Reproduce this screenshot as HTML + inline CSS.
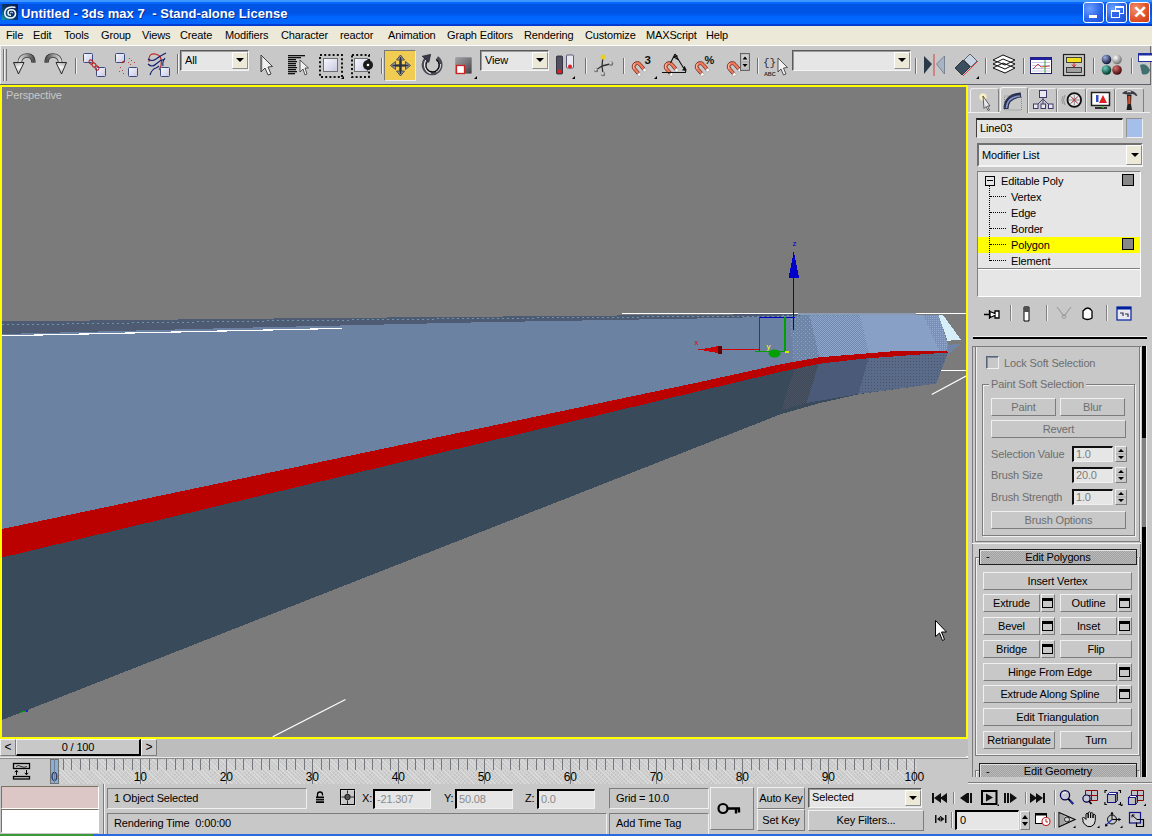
<!DOCTYPE html>
<html><head><meta charset="utf-8">
<style>
*{box-sizing:border-box;margin:0;padding:0}
html,body{width:1152px;height:836px;overflow:hidden}
body{position:relative;background:#c8c8c8;font-family:"Liberation Sans",sans-serif;font-size:11px;letter-spacing:-0.15px;color:#000}
.a{position:absolute}
#title{left:0;top:0;width:1152px;height:26px;background:linear-gradient(#3c96ff 0px,#3c96ff 1.5px,#0a68ff 2px,#0a66fc 3.8px,#0055e5 4.2px,#0054e4 13px,#005bf2 15px,#0066fe 17px,#0066fe 23.8px,#0040d8 24.2px,#0038c8 26px)}
#title .t{left:21px;top:5.5px;color:#fff;font-weight:bold;font-size:13px;letter-spacing:0.05px;white-space:pre;text-shadow:1px 1px 0 #0a2a8a}
.wb{top:2px;width:21px;height:21px;border:1px solid #fff;border-radius:3px;background:radial-gradient(circle at 30% 30%,#6aa0ff,#2a62e8 60%,#1c4fd0)}
#menu{left:0;top:26px;width:1152px;height:20px;background:#ece9d8}
#menu span{position:absolute;top:3px;font-size:11px}
#tb{left:0;top:46px;width:1152px;height:39px;background:#c8c8c8;border-top:1px solid #fff}
.sep{position:absolute;width:2px;border-left:1px solid #8c8c8c;border-right:1px solid #f0f0f0}
.dd{position:absolute;background:#e8e8e8;border:2px solid;border-color:#6e6e6e #f0f0f0 #f0f0f0 #6e6e6e}
.ddb{position:absolute;background:#ece9d8;border:1px solid;border-color:#fff #8a8a8a #8a8a8a #fff}
.ddb:after{content:"";position:absolute;left:4px;top:7px;border-left:4px solid transparent;border-right:4px solid transparent;border-top:4px solid #000}
#vp{left:0;top:85px;width:968px;height:654px;background:#7b7b7b;border:2px solid #ffff00;overflow:hidden}
#cp{left:968px;top:85px;width:184px;height:698px;background:#c8c8c8}
.btn{position:absolute;background:#c8c8c8;border:1px solid;border-color:#ececec #7c7c7c #7c7c7c #ececec;text-align:center;line-height:16px;white-space:nowrap}
.sb{position:absolute;width:15px;background:#c8c8c8;border:1px solid;border-color:#ececec #7c7c7c #7c7c7c #ececec}
.sb:after{content:"";position:absolute;left:3px;top:2px;width:7px;height:10px;border:1px solid #000;border-top:3px solid #000;background:#fff}
.gray{color:#7c7c7c}
.field{position:absolute;background:#e6e6e6;border:1px solid;border-color:#000 #f0f0f0 #f0f0f0 #000}
</style></head><body>

<!-- TITLE BAR -->
<div id="title" class="a">
  <svg class="a" style="left:2px;top:4px" width="16" height="16" viewBox="0 0 16 16"><defs><linearGradient id="ig" x1="1" y1="0" x2="0" y2="1"><stop offset="0" stop-color="#0a1848"/><stop offset="0.6" stop-color="#0c3a6a"/><stop offset="1" stop-color="#18a0b0"/></linearGradient></defs><rect width="16" height="16" fill="url(#ig)"/><path d="M13.5,3.5 Q10,2.5 7,3.5 Q2.5,5 2.8,9.5 Q3.2,14 8.5,14 Q13.5,13.8 13.5,9.5 Q13.3,6 9.5,5.8 Q6,5.8 6,9 Q6.2,11.5 9,11.3" fill="none" stroke="#f0f8ff" stroke-width="1.6"/><path d="M8,9 q1.5,-1.5 3,0" stroke="#e0f0ff" stroke-width="1" fill="none"/></svg>
  <div class="a t">Untitled - 3ds max 7  - Stand-alone License</div>
  <div class="a wb" style="left:1083px"><div class="a" style="left:5px;top:12px;width:8px;height:3px;background:#fff"></div></div>
  <div class="a wb" style="left:1106px"><div class="a" style="left:8px;top:3px;width:9px;height:8px;border:1px solid #fff;border-top-width:2px"></div><div class="a" style="left:4px;top:7px;width:9px;height:8px;border:1px solid #fff;border-top-width:2px;background:#2f66e6"></div></div>
  <div class="a wb" style="left:1129px;background:radial-gradient(circle at 30% 30%,#f0906a,#e0502a 60%,#c83a18)"><div class="a" style="left:3px;top:2px;font-size:17px;line-height:16px;color:#fff;font-weight:bold">&#x2715;</div></div>
</div>

<!-- MENU -->
<div id="menu" class="a">
  <span style="left:6px">File</span><span style="left:33px">Edit</span><span style="left:64px">Tools</span><span style="left:101px">Group</span><span style="left:142px">Views</span><span style="left:180px">Create</span><span style="left:225px">Modifiers</span><span style="left:281px">Character</span><span style="left:340px">reactor</span><span style="left:388px">Animation</span><span style="left:447px">Graph Editors</span><span style="left:524px">Rendering</span><span style="left:585px">Customize</span><span style="left:646px">MAXScript</span><span style="left:706px">Help</span>
</div>

<!-- TOOLBAR -->
<!--TB-->
<div class="a" style="left:0px;top:45px;width:1152px;height:1px;background:#fdfdfd"></div>
<div class="a" style="left:0px;top:46px;width:1151px;height:38px;background:#c8c8c8;border-left:1px solid #ececec"></div>
<div class="a" style="left:1150px;top:46px;width:1px;height:38px;background:#6a6a6a"></div>
<div class="a" style="left:0px;top:84px;width:1151px;height:1px;background:#60606c"></div>
<div class="a" style="left:384px;top:50px;width:32px;height:31px;background:#f0cd52;border:1px solid;border-color:#787878 #ececec #ececec #787878"></div>
<div class="a" style="left:180px;top:50px;width:69px;height:21px;background:#e6e6e6;border:1px solid;border-color:#5a5a5a #f4f4f4 #f4f4f4 #5a5a5a;box-shadow:inset 1px 1px 0 #9a9a9a;line-height:19px;padding-left:4px;font-size:11px">All</div>
<div class="a" style="left:232px;top:52px;width:16px;height:17px;background:#ece9d8;border:1px solid;border-color:#fff #8c8c8c #8c8c8c #fff"></div>
<svg class="a" style="left:232px;top:52px" width="16" height="17"><path d="M4,6 h8 l-4,4z" fill="#000"/></svg>
<div class="a" style="left:480px;top:50px;width:69px;height:21px;background:#e6e6e6;border:1px solid;border-color:#5a5a5a #f4f4f4 #f4f4f4 #5a5a5a;box-shadow:inset 1px 1px 0 #9a9a9a;line-height:19px;padding-left:4px;font-size:11px">View</div>
<div class="a" style="left:532px;top:52px;width:16px;height:17px;background:#ece9d8;border:1px solid;border-color:#fff #8c8c8c #8c8c8c #fff"></div>
<svg class="a" style="left:532px;top:52px" width="16" height="17"><path d="M4,6 h8 l-4,4z" fill="#000"/></svg>
<div class="a" style="left:792px;top:50px;width:119px;height:21px;background:#e6e6e6;border:1px solid;border-color:#5a5a5a #f4f4f4 #f4f4f4 #5a5a5a;box-shadow:inset 1px 1px 0 #9a9a9a;line-height:19px;padding-left:4px;font-size:11px"></div>
<div class="a" style="left:894px;top:52px;width:16px;height:17px;background:#ece9d8;border:1px solid;border-color:#fff #8c8c8c #8c8c8c #fff"></div>
<svg class="a" style="left:894px;top:52px" width="16" height="17"><path d="M4,6 h8 l-4,4z" fill="#000"/></svg>
<svg class="a" style="left:0;top:46px" width="1152" height="38" viewBox="0 46 1152 38">
<defs>
<linearGradient id="arr" x1="0" y1="0" x2="1" y2="1"><stop offset="0" stop-color="#f4f4f4"/><stop offset="0.5" stop-color="#a0a0a0"/><stop offset="1" stop-color="#303030"/></linearGradient>
<linearGradient id="arr2" x1="1" y1="0" x2="0" y2="1"><stop offset="0" stop-color="#f4f4f4"/><stop offset="0.5" stop-color="#a0a0a0"/><stop offset="1" stop-color="#303030"/></linearGradient>
<linearGradient id="box" x1="0" y1="0" x2="1" y2="1"><stop offset="0" stop-color="#f8f8ff"/><stop offset="1" stop-color="#c8c8e0"/></linearGradient>
<linearGradient id="arc" x1="0" y1="0" x2="1" y2="0"><stop offset="0" stop-color="#d8d8d8"/><stop offset="0.5" stop-color="#9a9a9a"/><stop offset="1" stop-color="#505050"/></linearGradient><linearGradient id="ah" x1="0" y1="0" x2="0.3" y2="1"><stop offset="0" stop-color="#a0a0a0"/><stop offset="0.5" stop-color="#f4f4f4"/><stop offset="1" stop-color="#c0c0c0"/></linearGradient>
<radialGradient id="ball" cx="0.35" cy="0.35" r="0.7"><stop offset="0" stop-color="#f0f0f0"/><stop offset="1" stop-color="#505050"/></radialGradient>
</defs>
<!-- grip -->
<path d="M3.5,49V81M6.5,49V81" stroke="#707070" stroke-width="1"/><path d="M4.5,49V81" stroke="#f0f0f0"/>
<!-- undo -->
<g id="undo">
<path d="M19.5,64 Q20,55.5 27,55.5 Q33.5,55.5 33.5,62.5" fill="none" stroke="#3a3a3a" stroke-width="4.6"/>
<path d="M19.5,64 Q20,55.5 27,55.5 Q33.5,55.5 33.5,62.5" fill="none" stroke="url(#arc)" stroke-width="3"/>
<path d="M13.5,62.5 L24,62.5 L18.5,74Z" fill="url(#ah)" stroke="#1a1a1a" stroke-width="0.9"/>
</g>
<g transform="translate(80,0) scale(-1,1)">
<path d="M19.5,64 Q20,55.5 27,55.5 Q33.5,55.5 33.5,62.5" fill="none" stroke="#3a3a3a" stroke-width="4.6"/>
<path d="M19.5,64 Q20,55.5 27,55.5 Q33.5,55.5 33.5,62.5" fill="none" stroke="url(#arc)" stroke-width="3"/>
<path d="M13.5,62.5 L24,62.5 L18.5,74Z" fill="url(#ah)" stroke="#1a1a1a" stroke-width="0.9"/>
</g>
<path d="M75.5,58V74" stroke="#707070"/><path d="M76.5,58V74" stroke="#f0f0f0"/>
<!-- link -->
<rect x="83.5" y="53.5" width="9" height="9" rx="1" fill="url(#box)" stroke="#3a4a80"/>
<rect x="96.5" y="67.5" width="9" height="9" rx="1" fill="url(#box)" stroke="#3a4a80"/>
<g stroke="#b02020" stroke-width="1" fill="none"><ellipse cx="91" cy="62" rx="1.8" ry="2.2" transform="rotate(-45 91 62)"/><ellipse cx="94" cy="65" rx="1.8" ry="2.2" transform="rotate(-45 94 65)"/><ellipse cx="97" cy="68" rx="1.8" ry="2.2" transform="rotate(-45 97 68)"/></g>
<!-- unlink -->
<rect x="115.5" y="53.5" width="9" height="9" rx="1" fill="url(#box)" stroke="#3a4a80"/>
<rect x="128.5" y="67.5" width="9" height="9" rx="1" fill="url(#box)" stroke="#3a4a80"/>
<path d="M122,63 q1,-2 3,-2" stroke="#b02020" stroke-width="1.2" fill="none"/>
<g fill="#c04040"><rect x="129" y="58" width="1" height="1"/><rect x="131" y="60" width="1" height="1"/><rect x="128" y="62" width="1" height="1"/><rect x="134" y="62" width="1" height="1"/><rect x="120" y="67" width="1" height="1"/><rect x="122" y="70" width="1" height="1"/><rect x="119" y="71" width="1" height="1"/><rect x="123" y="73" width="1" height="1"/><rect x="130" y="64" width="1" height="1"/></g>
<!-- bind space warp -->
<path d="M149,62 Q148,53 155,54 Q163,55 161,66 L159,70" stroke="#c02020" stroke-width="1.1" fill="none"/>
<path d="M148,59 Q152,62 156,59 Q160,56 166,53 M148,64 Q152,68 156,64 Q160,60 165,59 M150,75 Q152,69 156,68 Q158,67 159,66 M163,66 Q162,62 165,58" stroke="#102070" stroke-width="1.1" fill="none"/>
<rect x="160.5" y="67.5" width="9" height="9" rx="1" fill="url(#box)" stroke="#3a4a80"/>
<path d="M177.5,54V74" stroke="#707070"/><path d="M178.5,54V74" stroke="#f0f0f0"/>
<!-- select arrow -->
<path d="M261,55 L261,72 L265,68 L268,75 L271,74 L268,67 L272.5,66.5Z" fill="#f0f0f0" stroke="#303030" stroke-width="0.9"/>
<path d="M261.5,57 L261.5,71" stroke="#707070" stroke-width="1.5"/>
<!-- select by name -->
<g fill="#101010"><rect x="288" y="55" width="17" height="1.3"/><rect x="288" y="57" width="13" height="1.3"/><rect x="288" y="59" width="8" height="1.3"/><rect x="288" y="61" width="9" height="1.3"/><rect x="288" y="63" width="8" height="1.3"/><rect x="288" y="65" width="8" height="1.3"/><rect x="288" y="67" width="9" height="1.3"/><rect x="288" y="69" width="8" height="1.3"/><rect x="288" y="71" width="9" height="1.3"/><rect x="288" y="73" width="7" height="1.3"/></g>
<path d="M300,60 L300,72 L303,69 L305,75 L307,74 L305,68 L308.5,68Z" fill="#f0f0f0" stroke="#303030" stroke-width="0.8"/>
<!-- rect selection -->
<rect x="320" y="55" width="22" height="22" fill="none" stroke="#101010" stroke-width="2" stroke-dasharray="2,2.2"/>
<rect x="323.5" y="58.5" width="14" height="13" fill="url(#box)" stroke="#707070"/>
<path d="M341,79 L344,76 L344,79Z" fill="#000"/>
<!-- window/crossing -->
<rect x="352" y="55" width="17" height="22" fill="none" stroke="#101010" stroke-width="2" stroke-dasharray="2,2.2"/>
<rect x="354.5" y="58.5" width="13" height="13" fill="url(#box)" stroke="#707070"/>
<circle cx="368" cy="65" r="5" fill="#1a1a1a"/><circle cx="368" cy="65" r="1.3" fill="#fff"/>
<path d="M381.5,58V74" stroke="#707070"/><path d="M382.5,58V74" stroke="#f0f0f0"/>
<!-- move -->
<path d="M400.5,60 V71.5 M395,65.5 H406" stroke="#2a3040" stroke-width="2.2"/>
<path d="M400.5,55 L396.5,60 H404.5Z M400.5,76 L396.5,71 H404.5Z M390.5,65.5 L395.5,61.5 V69.5Z M410.5,65.5 L405.5,61.5 V69.5Z" fill="#9a9aa2" stroke="#3a3a48" stroke-width="0.8"/>
<path d="M400.5,57 V74 M392.5,65.5 H408.5" stroke="#2a3040" stroke-width="1.6"/>
<!-- rotate -->
<path d="M428.5,57.2 A8.5,8.5 0 1 0 436.97,57.9" stroke="#4a4a50" stroke-width="3.8" fill="none"/>
<path d="M426,60 A8.8,8.8 0 0 0 431,73.3" stroke="#e8e8f0" stroke-width="1.2" fill="none"/>
<path d="M436,72 A8.6,8.6 0 0 0 440.5,64" stroke="#d8d8e0" stroke-width="1.2" fill="none"/>
<path d="M429.5,59.5 A6.6,6.6 0 1 0 436.2,59.8" stroke="#000" stroke-width="1.1" fill="none"/>
<path d="M422.1,56.2 L430.75,54.3 L428.8,62.4Z" fill="#3a3a48" stroke="#202028" stroke-width="0.6"/>
<!-- scale -->
<rect x="455.5" y="57.5" width="16" height="16" fill="#505058"/>
<rect x="455.5" y="57.5" width="16" height="16" fill="url(#arr)" opacity="0.5"/>
<rect x="456.5" y="65.5" width="8" height="8" fill="#fff" stroke="#d02020" stroke-width="1.3"/>
<path d="M474,79 L477,76 L477,79Z" fill="#000"/>
<!-- pivot -->
<rect x="556.5" y="56" width="6" height="18" rx="1" fill="#505060" stroke="#202030" stroke-width="0.8"/>
<circle cx="559.5" cy="71.5" r="2" fill="#e02020"/>
<rect x="566.5" y="55" width="7" height="13" rx="1" fill="#e8e8f0" stroke="#3a3a60" stroke-width="0.8"/>
<circle cx="570" cy="66.5" r="2" fill="#e02020"/>
<path d="M572,79 L575,76 L575,79Z" fill="#000"/>
<path d="M585.5,58V74" stroke="#707070"/><path d="M586.5,58V74" stroke="#f0f0f0"/>
<!-- axis constraints -->
<path d="M603,56 L602,66 L596,70 M602,66 L610,64 M602,66 L603,74" stroke="#303030" stroke-width="1.3" fill="none"/>
<circle cx="603" cy="57" r="2.5" fill="#e8d020"/><circle cx="596" cy="70" r="2.2" fill="url(#ball)"/><circle cx="611" cy="63.5" r="2.2" fill="url(#ball)"/><circle cx="603" cy="74" r="2.2" fill="url(#ball)"/>
<path d="M623.5,58V74" stroke="#707070"/><path d="M624.5,58V74" stroke="#f0f0f0"/>
<!-- snaps -->
<g id="mag"><g transform="translate(637.2,66.6) rotate(-40)"><path d="M-5,6 V0 A5,5 0 0 1 5,0 V6 H2 V0 A2,2 0 0 0 -2,0 V6Z" fill="#f07a5a" stroke="#602018" stroke-width="0.7"/><path d="M-3.8,0 A3.8,3.8 0 0 1 0,-3.8" stroke="#ffb8a0" stroke-width="1" fill="none"/><rect x="-5" y="6" width="3" height="2.8" fill="#fff" stroke="#808080" stroke-width="0.4"/><rect x="2" y="6" width="3" height="2.8" fill="#fff" stroke="#808080" stroke-width="0.4"/></g></g>
<text x="644.5" y="63.5" font-family="Liberation Sans" font-weight="bold" font-size="11.5" fill="#101010">3</text>
<path d="M654,79 L657,76 L657,79Z" fill="#000"/>
<g transform="translate(32,0)"><g transform="translate(637.2,66.6) rotate(-40)"><path d="M-5,6 V0 A5,5 0 0 1 5,0 V6 H2 V0 A2,2 0 0 0 -2,0 V6Z" fill="#f07a5a" stroke="#602018" stroke-width="0.7"/><path d="M-3.8,0 A3.8,3.8 0 0 1 0,-3.8" stroke="#ffb8a0" stroke-width="1" fill="none"/><rect x="-5" y="6" width="3" height="2.8" fill="#fff" stroke="#808080" stroke-width="0.4"/><rect x="2" y="6" width="3" height="2.8" fill="#fff" stroke="#808080" stroke-width="0.4"/></g></g>
<path d="M662,72.5 L686,72.5 M675,54 L686,72 M670.5,63 L675,54 M674,57 l3,-1 l0,3z M683,70 l1.5,-3 l1.5,3z" stroke="#101010" stroke-width="1.1" fill="none"/>
<g transform="translate(63,0)"><g transform="translate(637.2,66.6) rotate(-40)"><path d="M-5,6 V0 A5,5 0 0 1 5,0 V6 H2 V0 A2,2 0 0 0 -2,0 V6Z" fill="#f07a5a" stroke="#602018" stroke-width="0.7"/><path d="M-3.8,0 A3.8,3.8 0 0 1 0,-3.8" stroke="#ffb8a0" stroke-width="1" fill="none"/><rect x="-5" y="6" width="3" height="2.8" fill="#fff" stroke="#808080" stroke-width="0.4"/><rect x="2" y="6" width="3" height="2.8" fill="#fff" stroke="#808080" stroke-width="0.4"/></g></g>
<text x="704.5" y="63.5" font-family="Liberation Sans" font-weight="bold" font-size="11" fill="#101010">%</text>
<g transform="translate(95,0)"><g transform="translate(637.2,66.6) rotate(-40)"><path d="M-5,6 V0 A5,5 0 0 1 5,0 V6 H2 V0 A2,2 0 0 0 -2,0 V6Z" fill="#f07a5a" stroke="#602018" stroke-width="0.7"/><path d="M-3.8,0 A3.8,3.8 0 0 1 0,-3.8" stroke="#ffb8a0" stroke-width="1" fill="none"/><rect x="-5" y="6" width="3" height="2.8" fill="#fff" stroke="#808080" stroke-width="0.4"/><rect x="2" y="6" width="3" height="2.8" fill="#fff" stroke="#808080" stroke-width="0.4"/></g></g>
<rect x="740.5" y="53.5" width="9" height="17" fill="#b0b0b0" stroke="#505050" stroke-width="0.8"/><rect x="741.5" y="54.5" width="7" height="6.5" fill="#d0d0d0"/><rect x="741.5" y="62.5" width="7" height="6.5" fill="#c0c0c0"/>
<path d="M742.5,59.5 L745,56.5 L747.5,59.5Z M742.5,64 L747.5,64 L745,67Z" fill="#000"/>
<path d="M757.5,58V74" stroke="#707070"/><path d="M758.5,58V74" stroke="#f0f0f0"/>
<!-- named sel -->
<text x="763" y="66" font-family="Liberation Mono" font-size="11" fill="#303030">{}</text>
<text x="764" y="76" font-family="Liberation Sans" font-weight="bold" font-size="5.5" fill="#303030">ABC</text>
<path d="M778,58 L778,72 L781,69 L783.5,75 L786,74 L783.5,68 L787.5,67.5Z" fill="#f0f0f0" stroke="#303030" stroke-width="0.8"/>
<path d="M915.5,58V74" stroke="#707070"/><path d="M916.5,58V74" stroke="#f0f0f0"/>
<!-- mirror -->
<path d="M924,56 L932,64 L924,74Z" fill="#2a3a48"/><path d="M944.5,56 L936.5,64 L944.5,74Z" fill="#a8b4c4" stroke="#506070" stroke-width="0.6"/>
<path d="M934,54V76" stroke="#d04040" stroke-width="1"/>
<!-- align -->
<path d="M955,68 L963,60 L970,67 L962,75Z" fill="#3a5060" stroke="#202020" stroke-width="0.8"/>
<path d="M964,60 L970,54 L977,61 L971,67Z" fill="#c8d4e4" stroke="#404850" stroke-width="0.8"/>
<path d="M963,76 L978,61" stroke="#e04040" stroke-width="1"/>
<path d="M976,79 L979,76 L979,79Z" fill="#000"/>
<path d="M985.5,58V74" stroke="#707070"/><path d="M986.5,58V74" stroke="#f0f0f0"/>
<!-- layers -->
<path d="M993,60 L1003,55 L1015,60 L1005,65Z M993,64 L1003,59 L1015,64 L1005,69Z M993,68 L1003,63 L1015,68 L1005,73Z" fill="#fff" stroke="#101010" stroke-width="1"/>
<path d="M1023.5,58V74" stroke="#707070"/><path d="M1024.5,58V74" stroke="#f0f0f0"/>
<!-- curve editor -->
<rect x="1030.5" y="57.5" width="21" height="16" fill="#fff" stroke="#202060"/>
<rect x="1030.5" y="57.5" width="21" height="2.5" fill="#2020a0"/>
<path d="M1032,62.5h18M1032,65.5h18M1032,68.5h18M1032,71h18" stroke="#a0a0d0" stroke-width="0.6"/>
<path d="M1033,69 L1038,64 L1041,67 L1050,66" stroke="#d03030" stroke-width="0.9" fill="none"/>
<path d="M1045,60V73" stroke="#20a020" stroke-width="0.9"/>
<!-- schematic -->
<rect x="1063.5" y="54.5" width="21" height="21" fill="#c8c8c8" stroke="#202020" stroke-width="1.2"/>
<rect x="1066.5" y="57.5" width="15" height="5" fill="#f0e020" stroke="#202020" stroke-width="0.8"/>
<rect x="1066.5" y="67.5" width="15" height="5" fill="#a0a0a0" stroke="#202020" stroke-width="0.8"/>
<path d="M1074,62.5V66 M1072,64.5 L1074,67 L1076,64.5" stroke="#d02020" stroke-width="1" fill="none"/>
<path d="M1093.5,58V74" stroke="#707070"/><path d="M1094.5,58V74" stroke="#f0f0f0"/>
<!-- material editor -->
<radialGradient id="s1" cx="0.35" cy="0.3" r="0.7"><stop offset="0" stop-color="#a0b0e0"/><stop offset="1" stop-color="#101838"/></radialGradient>
<radialGradient id="s2" cx="0.35" cy="0.3" r="0.7"><stop offset="0" stop-color="#ffffff"/><stop offset="1" stop-color="#707070"/></radialGradient>
<radialGradient id="s3" cx="0.35" cy="0.3" r="0.7"><stop offset="0" stop-color="#70d0c0"/><stop offset="1" stop-color="#003828"/></radialGradient>
<radialGradient id="s4" cx="0.35" cy="0.3" r="0.7"><stop offset="0" stop-color="#e07070"/><stop offset="1" stop-color="#400808"/></radialGradient>
<circle cx="1106.5" cy="59.5" r="4.8" fill="url(#s1)"/><circle cx="1117" cy="59.5" r="4.8" fill="url(#s2)"/>
<circle cx="1106.5" cy="70" r="4.8" fill="url(#s3)"/><circle cx="1117" cy="70" r="4.8" fill="url(#s4)"/>
<path d="M1131.5,58V74" stroke="#707070"/><path d="M1132.5,58V74" stroke="#f0f0f0"/>
<!-- render scene -->
<rect x="1138.5" y="53.5" width="14" height="8" fill="#fff" stroke="#2030a0"/><rect x="1138.5" y="53.5" width="14" height="2" fill="#2030a0"/>
<path d="M1140,65 Q1146,62 1150,70 Q1148,76 1142,74Z" fill="#407070"/>
</svg>
<!--/TB-->
<!-- VIEWPORT -->
<div id="vp" class="a"></div>
<svg class="a" style="left:2px;top:87px" width="964" height="650" viewBox="2 87 964 650" shape-rendering="crispEdges">
<defs>
<pattern id="dotA" width="4" height="4" patternUnits="userSpaceOnUse"><rect width="4" height="4" fill="#6e85a7"/><rect x="1" y="1" width="1" height="1" fill="#98aac4"/><rect x="3" y="3" width="1" height="1" fill="#8a9ebc"/></pattern>
<pattern id="dotB" width="2" height="2" patternUnits="userSpaceOnUse"><rect width="2" height="2" fill="#7189ad"/><rect width="1" height="1" fill="#8ea6ce"/><rect x="1" y="1" width="1" height="1" fill="#8ea6ce"/></pattern>
<pattern id="dotD" width="2" height="2" patternUnits="userSpaceOnUse"><rect width="2" height="2" fill="#3b4858"/><rect width="1" height="1" fill="#4e5464"/><rect x="1" y="1" width="1" height="1" fill="#4e5464"/></pattern>
<pattern id="dotF" width="3" height="3" patternUnits="userSpaceOnUse"><rect width="3" height="3" fill="#5a6b8a"/><rect x="1" y="1" width="1" height="1" fill="#46566f"/></pattern>
<pattern id="dotG" width="2" height="2" patternUnits="userSpaceOnUse"><rect width="2" height="2" fill="#7890b6"/><rect width="1" height="1" fill="#97acd0"/></pattern>
</defs>
<!-- top face -->
<polygon fill="#6b82a3" points="2,321.5 938,314.7 948,345 946,350.5 890,351.5 860,354 820,357.2 780,364.4 700,382 2,529"/>
<polygon fill="url(#dotA)" points="789.4,315 809.5,315 819.5,357.6 794,363.5"/>
<polygon fill="url(#dotB)" points="809.5,315 859.7,314.8 870,357 820.5,362"/>
<polygon fill="#88a0c6" points="859.7,314.8 923,314.7 941,355 870,357"/>
<polygon fill="url(#dotG)" points="923,314.7 938.3,314.7 948.2,344.7 946,352 941,355"/>
<polygon fill="#d6eefa" points="938.3,314.7 942.9,314.7 960.7,339.5 947.5,340.8"/>
<polygon fill="#6f84a6" points="948.2,344.7 960.7,344 946.2,355.9"/>
<!-- dark band near far edge -->
<polygon fill="#4e5b72" points="2,321.5 240,318.8 480,316.7 720,314.6 800,314 800,316 720,318.1 480,322.3 240,327.8 2,334"/>
<polyline fill="none" stroke="#6a94a8" stroke-width="1" stroke-dasharray="2,3" points="2,325 240,321.3 480,318.5 720,316.3 860,315.6"/>
<polyline fill="none" stroke="#ffffff" stroke-width="1.2" points="2,335.8 342,328.4"/>
<polyline fill="none" stroke="#ffffff" stroke-width="1.2" points="622,313.4 798,313.2"/>
<rect x="798" y="313" width="118" height="2" fill="#8c9ab4"/>
<polyline fill="none" stroke="#ffffff" stroke-width="1.2" points="916,313.6 966,313.6"/>
<!-- side face -->
<polygon fill="#394a5b" points="2,557.5 700,390.9 780,372 820,363.7 860,359 890,356.7 948,352.5 936.3,383.6 860,394 820,403 780,414.5 2,720"/>
<polygon fill="url(#dotD)" points="795,366.8 819.5,361.5 806.6,403 781.5,410"/>
<polygon fill="#4a5a78" points="819.5,361.5 869,356.5 858.3,394 806.6,403"/>
<polygon fill="url(#dotF)" points="869,356.5 948,352.5 936.3,383.6 858.3,394"/>
<!-- red stripe -->
<polygon fill="#bb0000" points="2,529 700,382 780,364.4 820,357.2 860,354 890,351.5 946,350.5 948,352.5 890,356.7 860,359 820,363.7 780,372 700,390.9 2,557.5"/>
<!-- white lines -->
<line x1="941" y1="370.7" x2="966" y2="370.7" stroke="#fff" stroke-width="1.5"/>
<line x1="931.7" y1="394.5" x2="966" y2="376" stroke="#fff" stroke-width="1.2" shape-rendering="auto"/>
<line x1="272.7" y1="736.8" x2="345.5" y2="699.5" stroke="#fff" stroke-width="1.2" shape-rendering="auto"/>
<!-- gizmo -->
<g shape-rendering="crispEdges">
<rect x="793" y="270" width="1" height="60" fill="#0000c8"/>
<polygon fill="#0000c8" points="793.8,251 788.7,277.7 799.1,277.7"/>
<line x1="760" y1="317.4" x2="794.8" y2="317.4" stroke="#0000c8" stroke-width="1.5"/>
<line x1="759.5" y1="317" x2="759.5" y2="350.5" stroke="#d00000" stroke-width="1.5"/>
<line x1="785" y1="317.4" x2="785" y2="351.3" stroke="#00a000" stroke-width="1.5"/>
<line x1="698" y1="349.7" x2="760" y2="349.7" stroke="#d00000" stroke-width="1.5"/>
<polygon fill="#d00000" points="699,349.7 721.8,345.5 721.8,353.8"/>
<rect x="718" y="345.5" width="3.5" height="8" fill="#600000"/>
<line x1="755.3" y1="351.3" x2="785" y2="351.3" stroke="#00a000" stroke-width="1.5"/>
<line x1="772" y1="350.5" x2="777" y2="350.5" stroke="#e8e000" stroke-width="1.5"/>
<line x1="785" y1="352" x2="789" y2="352" stroke="#e8e000" stroke-width="1.5"/>
<ellipse cx="774.5" cy="353.5" rx="6" ry="4" fill="#00a000" shape-rendering="auto"/>
</g>
<text x="792.5" y="245.5" font-family="Liberation Sans" font-size="8" fill="#0000d0">z</text>
<text x="694.5" y="345" font-family="Liberation Sans" font-size="8" fill="#e00000">x</text>
<text x="766.5" y="349" font-family="Liberation Sans" font-size="8" fill="#ffff00">y</text>
<!-- world-axis --><line x1="20" y1="712.5" x2="26" y2="711" stroke="#00a000" stroke-width="1"/><rect x="26" y="710" width="2" height="2" fill="#2020d0"/>
<!-- mouse cursor -->
<polygon fill="#fff" stroke="#000" stroke-width="1" shape-rendering="auto" points="935.5,620.5 935.5,636.5 939.5,633 942.5,640.5 944.5,639.5 941.5,632 946.5,632"/>
</svg>
<div class="a" style="left:6px;top:89px;color:#c8c8c8;font-size:11px">Perspective</div>

<!-- COMMAND PANEL -->
<div id="cp" class="a"></div>
<!--CP-->
<div class="a" style="left:970px;top:88px;width:29px;height:24px;background:#c8c8c8;border-left:1px solid #ececec;border-top:1px solid #ececec;border-right:1px solid #808080;border-radius:3px 3px 0 0;"></div>
<div class="a" style="left:1000px;top:87px;width:28px;height:26px;background:#c8c8c8;border-left:1px solid #f4f4f4;border-top:1px solid #f4f4f4;border-right:1px solid #808080;border-radius:3px 3px 0 0;z-index:2;"></div>
<div class="a" style="left:1028px;top:88px;width:29px;height:24px;background:#c8c8c8;border-left:1px solid #ececec;border-top:1px solid #ececec;border-right:1px solid #808080;border-radius:3px 3px 0 0;"></div>
<div class="a" style="left:1057px;top:88px;width:29px;height:24px;background:#c8c8c8;border-left:1px solid #ececec;border-top:1px solid #ececec;border-right:1px solid #808080;border-radius:3px 3px 0 0;"></div>
<div class="a" style="left:1086px;top:88px;width:29px;height:24px;background:#c8c8c8;border-left:1px solid #ececec;border-top:1px solid #ececec;border-right:1px solid #808080;border-radius:3px 3px 0 0;"></div>
<div class="a" style="left:1115px;top:88px;width:29px;height:24px;background:#c8c8c8;border-left:1px solid #ececec;border-top:1px solid #ececec;border-right:1px solid #808080;border-radius:3px 3px 0 0;"></div>
<div class="a" style="left:968px;top:112px;width:182px;height:1px;background:#f0f0f0"></div>
<div class="a" style="left:1000px;top:111px;width:27px;height:3px;background:#c8c8c8;z-index:3"></div>

<svg class="a" style="left:970px;top:88px;z-index:5" width="180" height="24" viewBox="970 88 180 24">
 <!-- create: star + cursor -->
 <g><circle cx="983" cy="97" r="3.5" fill="#fff8d8"/><path d="M979,97h8M983,93v8M980,94l6,6M986,94l-6,6" stroke="#f0e6b0" stroke-width="1"/>
 <path d="M983,96 l0,0 L990,106 L987.5,106 L989.5,110 L988,110.5 L986,106.5 L984,108.5 Z" fill="#e8e8f0" stroke="#404040" stroke-width="0.8"/></g>
 <!-- modify: bent tube -->
 <path d="M1006,109 Q1006,96 1021,95" fill="none" stroke="#2a3050" stroke-width="5"/>
 <path d="M1006.5,108 Q1007,97 1020,96" fill="none" stroke="#8a9ad0" stroke-width="1.6"/>
 <rect x="1004.5" y="96" width="17" height="14" fill="none" stroke="#606060" stroke-width="0.6" stroke-dasharray="1,1"/>
 <!-- hierarchy -->
 <rect x="1039.5" y="90.5" width="7" height="7" fill="#e8e8f0" stroke="#403868"/>
 <path d="M1043,97.5V104M1043,99L1036,106M1043,99L1050,106" stroke="#403868" stroke-width="0.9" fill="none"/>
 <rect x="1033.5" y="104" width="4.5" height="4.5" fill="#e8e8f0" stroke="#403868"/><rect x="1041" y="104" width="4.5" height="4.5" fill="#e8e8f0" stroke="#403868"/><rect x="1048.5" y="104" width="4.5" height="4.5" fill="#e8e8f0" stroke="#403868"/>
 <!-- motion: wheel -->
 <circle cx="1074.3" cy="100" r="6.8" fill="#ececec" stroke="#101010" stroke-width="1.8"/>
 <path d="M1074.3,94.5v11M1068.8,100h11M1070.3,96l8,8M1078.3,96l-8,8" stroke="#606070" stroke-width="0.7"/><path d="M1071.5,97.2l5.6,5.6M1077.1,97.2l-5.6,5.6" stroke="#d03030" stroke-width="0.9"/>
 <path d="M1065,95 Q1062,100 1065,105M1063,96 Q1060.5,100 1063,104" stroke="#707070" stroke-width="0.6" fill="none"/>
 <!-- display: monitor -->
 <rect x="1091.5" y="92.5" width="18" height="13" fill="#fff" stroke="#202020" stroke-width="1.5"/>
 <rect x="1096" y="95" width="2.5" height="7" fill="#3050c0"/><path d="M1099,103 L1103,95 L1107,103Z" fill="#e02020"/>
 <rect x="1095" y="107" width="12" height="2" fill="#303030"/><rect x="1102" y="106.5" width="2" height="1.5" fill="#20c020"/>
 <!-- utilities: hammer -->
 <path d="M1122,93.5 Q1124,90.5 1130,90.5 Q1135,90.8 1137.5,95.5 L1136,96 Q1134,93.5 1131.5,94 L1127.5,94.5 Q1124,94 1122,93.5Z" fill="#3a3a44"/>
 <path d="M1127,92 Q1129,91 1131,92" stroke="#f0f0f0" stroke-width="1.2" fill="none"/>
 <path d="M1127,94.5 L1131.5,94.5 L1131,104 L1132,110 L1126.5,110 L1127.5,104Z" fill="#202020"/>
 <rect x="1128.2" y="96" width="2.2" height="8" fill="#d84a2a"/>
</svg>
<div class="a" style="left:976px;top:118px;width:147px;height:20px;background:#e6e6e6;border-top:2px solid #202020;border-left:1px solid #404040;border-bottom:1px solid #f0f0f0;border-right:1px solid #f0f0f0;line-height:16px;padding-left:3px">Line03</div>
<div class="a" style="left:1126px;top:118px;width:17px;height:20px;background:#a4c0ea;border-top:1px solid #909090;border-left:1px solid #909090;border-right:1px solid #f0f0f0;border-bottom:1px solid #f0f0f0"></div>
<div class="a" style="left:977px;top:143px;width:166px;height:24px;background:#e6e6e6;border:2px solid;border-color:#707070 #f4f4f4 #f4f4f4 #707070;line-height:20px;padding-left:3px">Modifier List</div>
<div class="a ddb" style="left:1126px;top:145px;width:16px;height:20px;"></div>
<div class="a" style="left:977px;top:171px;width:164px;height:126px;background:#e6e6e6;border:1px solid;border-color:#808080 #fff #fff #808080"></div>
<div class="a" style="left:978px;top:237px;width:162px;height:16px;background:#ffff00"></div>
<div class="a" style="left:1001px;top:174px;width:120px;height:14px;line-height:14px;font-size:11px">Editable Poly</div>
<div class="a" style="left:1011px;top:190px;width:120px;height:14px;line-height:14px;font-size:11px">Vertex</div>
<div class="a" style="left:1011px;top:206px;width:120px;height:14px;line-height:14px;font-size:11px">Edge</div>
<div class="a" style="left:1011px;top:222px;width:120px;height:14px;line-height:14px;font-size:11px">Border</div>
<div class="a" style="left:1011px;top:238px;width:120px;height:14px;line-height:14px;font-size:11px">Polygon</div>
<div class="a" style="left:1011px;top:254px;width:120px;height:14px;line-height:14px;font-size:11px">Element</div>
<div class="a" style="left:985px;top:176px;width:10px;height:10px;border:1px solid #000;background:#e6e6e6"></div>
<div class="a" style="left:987px;top:180px;width:6px;height:1px;background:#000"></div>
<div class="a" style="left:989px;top:186px;width:1px;height:75px;border-left:1px dotted #000;width:0"></div>
<div class="a" style="left:990px;top:196px;width:16px;height:1px;border-top:1px dotted #000;height:0"></div>
<div class="a" style="left:990px;top:212px;width:16px;height:1px;border-top:1px dotted #000;height:0"></div>
<div class="a" style="left:990px;top:228px;width:16px;height:1px;border-top:1px dotted #000;height:0"></div>
<div class="a" style="left:990px;top:244px;width:16px;height:1px;border-top:1px dotted #000;height:0"></div>
<div class="a" style="left:990px;top:260px;width:16px;height:1px;border-top:1px dotted #000;height:0"></div>
<div class="a" style="left:1122px;top:174px;width:12px;height:12px;background:#888;border:1px solid #000"></div>
<div class="a" style="left:1122px;top:238px;width:12px;height:12px;background:#888;border:1px solid #000"></div>
<div class="a" style="left:978px;top:268px;width:162px;height:1px;background:#808080"></div>
<div class="a" style="left:978px;top:269px;width:162px;height:1px;background:#fff"></div>

<svg class="a" style="left:975px;top:300px" width="170" height="26" viewBox="975 300 170 26">
 <path d="M984,314.5h6M989.5,310v9M990,311.5 l5,2 l0,-2.5 l4,0 l0,7 l-4,0 l0,-2.5 l-5,2z" stroke="#000" stroke-width="1.3" fill="#fff"/>
 <path d="M1010.5,305v16" stroke="#808080"/><path d="M1011.5,305v16" stroke="#f0f0f0"/>
 <path d="M1024,307 h5 v14 h-5z" fill="#fff" stroke="#000" stroke-width="1"/><path d="M1024,307 l2.5,-1 l2.5,1 v5 h-5z" fill="#505050"/>
 <path d="M1046.5,305v16" stroke="#808080"/><path d="M1047.5,305v16" stroke="#f0f0f0"/>
 <path d="M1057,307 L1064,316 L1071,307" stroke="#a0a0a0" stroke-width="1.2" fill="none"/><circle cx="1064" cy="316.5" r="2" fill="none" stroke="#a0a0a0"/>
 <path d="M1083,311 q5,-6 9,0 v7 q-4.5,3 -9,0z" fill="#fff" stroke="#000" stroke-width="1.3"/>
 <path d="M1106.5,305v16" stroke="#808080"/><path d="M1107.5,305v16" stroke="#f0f0f0"/>
 <rect x="1117" y="307" width="14" height="13" fill="#e8e8f0" stroke="#0020a0" stroke-width="1.2"/><rect x="1117" y="307" width="14" height="2.5" fill="#0020a0"/>
 <path d="M1120,313 h3 v3 M1125,314 h3 v3" stroke="#303050" stroke-width="1.2" fill="none"/>
</svg>
<div class="a" style="left:973px;top:336px;width:174px;height:1px;background:#f0f0f0"></div>
<div class="a" style="left:973px;top:337px;width:174px;height:2px;background:#000"></div>
<div class="a" style="left:972px;top:346px;width:169px;height:431px;border:1px solid #7c7c7c;border-bottom:none"></div>
<div class="a" style="left:972px;top:543px;width:169px;height:1px;background:#f0f0f0"></div>
<div class="a" style="left:975px;top:347px;width:165px;height:195px;border-left:1px solid #7c7c7c;border-bottom:1px solid #7c7c7c"></div>
<div class="a" style="left:976px;top:347px;width:163px;height:194px;border-left:1px solid #f0f0f0"></div>
<div class="a" style="left:1139px;top:347px;width:1px;height:195px;background:#7c7c7c"></div>
<div class="a" style="left:1140px;top:347px;width:1px;height:195px;background:#f0f0f0"></div>
<div class="a" style="left:1142px;top:346px;width:4px;height:92px;background:#000"></div>
<div class="a" style="left:1142px;top:438px;width:4px;height:89px;background:#808080"></div>
<div class="a" style="left:1142px;top:527px;width:4px;height:250px;background:#000"></div>
<div class="a" style="left:1146px;top:346px;width:1px;height:431px;background:#f0f0f0"></div>
<div class="a" style="left:986px;top:356px;width:13px;height:13px;border:1px solid;border-color:#5a6478 #f0f0f0 #f0f0f0 #5a6478;box-shadow:inset 1px 1px 0 #8090a0;background:#c8c8c8"></div>
<div class="a" style="left:1004px;top:356px;width:130px;height:14px;color:#6e6e6e;line-height:14px">Lock Soft Selection</div>
<div class="a" style="left:982px;top:384px;width:153px;height:152px;border:1px solid #7c7c7c;box-shadow:inset 1px 1px 0 #f0f0f0, 1px 1px 0 #f0f0f0"></div>
<div class="a" style="left:989px;top:377px;width:97px;height:14px;background:#c8c8c8;color:#6e6e6e;line-height:14px;padding-left:2px;white-space:nowrap">Paint Soft Selection</div>
<div class="a" style="left:991px;top:398px;width:65px;height:18px;background:#c8c8c8;border:1px solid;border-color:#f0f0f0 #7c7c7c #7c7c7c #f0f0f0;text-align:center;line-height:16px;white-space:nowrap;color:#6e6e6e;">Paint</div>
<div class="a" style="left:1060px;top:398px;width:65px;height:18px;background:#c8c8c8;border:1px solid;border-color:#f0f0f0 #7c7c7c #7c7c7c #f0f0f0;text-align:center;line-height:16px;white-space:nowrap;color:#6e6e6e;">Blur</div>
<div class="a" style="left:991px;top:420px;width:135px;height:18px;background:#c8c8c8;border:1px solid;border-color:#f0f0f0 #7c7c7c #7c7c7c #f0f0f0;text-align:center;line-height:16px;white-space:nowrap;color:#6e6e6e;">Revert</div>
<div class="a" style="left:991px;top:447px;width:80px;height:14px;color:#6e6e6e;line-height:14px">Selection Value</div>
<div class="a" style="left:1072px;top:446px;width:41px;height:16px;background:#e6e6e6;border:1px solid;border-color:#101010 #f0f0f0 #f0f0f0 #101010;border-width:2px 1px 1px 2px;color:#7c7c7c;line-height:12px;padding-left:2px;font-size:11px">1.0</div>
<div class="a" style="left:1115px;top:446px;width:12px;height:16px;background:#c8c8c8;border:1px solid;border-color:#f0f0f0 #7c7c7c #7c7c7c #f0f0f0"></div>
<svg class="a" style="left:1115px;top:446px" width="12" height="16"><path d="M3,6 L6,3 L9,6Z M3,10 L9,10 L6,13Z" fill="#000"/><path d="M1,8h10" stroke="#909090" stroke-width="0.6"/></svg>
<div class="a" style="left:991px;top:468px;width:80px;height:14px;color:#6e6e6e;line-height:14px">Brush Size</div>
<div class="a" style="left:1072px;top:467px;width:41px;height:16px;background:#e6e6e6;border:1px solid;border-color:#101010 #f0f0f0 #f0f0f0 #101010;border-width:2px 1px 1px 2px;color:#7c7c7c;line-height:12px;padding-left:2px;font-size:11px">20.0</div>
<div class="a" style="left:1115px;top:467px;width:12px;height:16px;background:#c8c8c8;border:1px solid;border-color:#f0f0f0 #7c7c7c #7c7c7c #f0f0f0"></div>
<svg class="a" style="left:1115px;top:467px" width="12" height="16"><path d="M3,6 L6,3 L9,6Z M3,10 L9,10 L6,13Z" fill="#000"/><path d="M1,8h10" stroke="#909090" stroke-width="0.6"/></svg>
<div class="a" style="left:991px;top:490px;width:80px;height:14px;color:#6e6e6e;line-height:14px">Brush Strength</div>
<div class="a" style="left:1072px;top:489px;width:41px;height:16px;background:#e6e6e6;border:1px solid;border-color:#101010 #f0f0f0 #f0f0f0 #101010;border-width:2px 1px 1px 2px;color:#7c7c7c;line-height:12px;padding-left:2px;font-size:11px">1.0</div>
<div class="a" style="left:1115px;top:489px;width:12px;height:16px;background:#c8c8c8;border:1px solid;border-color:#f0f0f0 #7c7c7c #7c7c7c #f0f0f0"></div>
<svg class="a" style="left:1115px;top:489px" width="12" height="16"><path d="M3,6 L6,3 L9,6Z M3,10 L9,10 L6,13Z" fill="#000"/><path d="M1,8h10" stroke="#909090" stroke-width="0.6"/></svg>
<div class="a" style="left:991px;top:511px;width:135px;height:18px;background:#c8c8c8;border:1px solid;border-color:#f0f0f0 #7c7c7c #7c7c7c #f0f0f0;text-align:center;line-height:16px;white-space:nowrap;color:#6e6e6e;">Brush Options</div>
<div class="a" style="left:975px;top:557px;width:165px;height:199px;border:1px solid #7c7c7c;box-shadow:inset 1px 1px 0 #f0f0f0"></div>
<div class="a" style="left:976px;top:557px;width:163px;height:198px;border-right:1px solid #f0f0f0;border-bottom:1px solid #f0f0f0"></div>
<div class="a" style="left:979px;top:549px;width:158px;height:16px;background:conic-gradient(#a2a2a2 25%,#b9b9b9 0 50%,#a2a2a2 0 75%,#b9b9b9 0) 0 0/2px 2px;border:1px solid;border-color:#202020 #202020 #202020 #202020;box-shadow:inset 1px 1px 0 #e0e0e0;text-align:center;line-height:14px;font-size:11px">Edit Polygons</div>
<div class="a" style="left:986px;top:549px;width:8px;height:14px;line-height:14px">-</div>
<div class="a" style="left:983px;top:572px;width:149px;height:18px;background:#c8c8c8;border:1px solid;border-color:#f0f0f0 #7c7c7c #7c7c7c #f0f0f0;text-align:center;line-height:16px;white-space:nowrap;color:#000;">Insert Vertex</div>
<div class="a" style="left:983px;top:594px;width:57px;height:18px;background:#c8c8c8;border:1px solid;border-color:#f0f0f0 #7c7c7c #7c7c7c #f0f0f0;text-align:center;line-height:16px;white-space:nowrap;color:#000;">Extrude</div>
<div class="a" style="left:1041px;top:594px;width:14px;height:18px;background:#c8c8c8;border:1px solid;border-color:#f0f0f0 #7c7c7c #7c7c7c #f0f0f0;text-align:center;line-height:16px;white-space:nowrap;color:#000;"></div>
<div class="a" style="left:1060px;top:594px;width:57px;height:18px;background:#c8c8c8;border:1px solid;border-color:#f0f0f0 #7c7c7c #7c7c7c #f0f0f0;text-align:center;line-height:16px;white-space:nowrap;color:#000;">Outline</div>
<div class="a" style="left:1118px;top:594px;width:14px;height:18px;background:#c8c8c8;border:1px solid;border-color:#f0f0f0 #7c7c7c #7c7c7c #f0f0f0;text-align:center;line-height:16px;white-space:nowrap;color:#000;"></div>
<div class="a" style="left:983px;top:617px;width:57px;height:18px;background:#c8c8c8;border:1px solid;border-color:#f0f0f0 #7c7c7c #7c7c7c #f0f0f0;text-align:center;line-height:16px;white-space:nowrap;color:#000;">Bevel</div>
<div class="a" style="left:1041px;top:617px;width:14px;height:18px;background:#c8c8c8;border:1px solid;border-color:#f0f0f0 #7c7c7c #7c7c7c #f0f0f0;text-align:center;line-height:16px;white-space:nowrap;color:#000;"></div>
<div class="a" style="left:1060px;top:617px;width:57px;height:18px;background:#c8c8c8;border:1px solid;border-color:#f0f0f0 #7c7c7c #7c7c7c #f0f0f0;text-align:center;line-height:16px;white-space:nowrap;color:#000;">Inset</div>
<div class="a" style="left:1118px;top:617px;width:14px;height:18px;background:#c8c8c8;border:1px solid;border-color:#f0f0f0 #7c7c7c #7c7c7c #f0f0f0;text-align:center;line-height:16px;white-space:nowrap;color:#000;"></div>
<div class="a" style="left:983px;top:640px;width:57px;height:18px;background:#c8c8c8;border:1px solid;border-color:#f0f0f0 #7c7c7c #7c7c7c #f0f0f0;text-align:center;line-height:16px;white-space:nowrap;color:#000;">Bridge</div>
<div class="a" style="left:1041px;top:640px;width:14px;height:18px;background:#c8c8c8;border:1px solid;border-color:#f0f0f0 #7c7c7c #7c7c7c #f0f0f0;text-align:center;line-height:16px;white-space:nowrap;color:#000;"></div>
<div class="a" style="left:1060px;top:640px;width:72px;height:18px;background:#c8c8c8;border:1px solid;border-color:#f0f0f0 #7c7c7c #7c7c7c #f0f0f0;text-align:center;line-height:16px;white-space:nowrap;color:#000;">Flip</div>
<div class="a" style="left:983px;top:663px;width:134px;height:18px;background:#c8c8c8;border:1px solid;border-color:#f0f0f0 #7c7c7c #7c7c7c #f0f0f0;text-align:center;line-height:16px;white-space:nowrap;color:#000;">Hinge From Edge</div>
<div class="a" style="left:1118px;top:663px;width:14px;height:18px;background:#c8c8c8;border:1px solid;border-color:#f0f0f0 #7c7c7c #7c7c7c #f0f0f0;text-align:center;line-height:16px;white-space:nowrap;color:#000;"></div>
<div class="a" style="left:983px;top:685px;width:134px;height:18px;background:#c8c8c8;border:1px solid;border-color:#f0f0f0 #7c7c7c #7c7c7c #f0f0f0;text-align:center;line-height:16px;white-space:nowrap;color:#000;">Extrude Along Spline</div>
<div class="a" style="left:1118px;top:685px;width:14px;height:18px;background:#c8c8c8;border:1px solid;border-color:#f0f0f0 #7c7c7c #7c7c7c #f0f0f0;text-align:center;line-height:16px;white-space:nowrap;color:#000;"></div>
<div class="a" style="left:983px;top:708px;width:149px;height:18px;background:#c8c8c8;border:1px solid;border-color:#f0f0f0 #7c7c7c #7c7c7c #f0f0f0;text-align:center;line-height:16px;white-space:nowrap;color:#000;">Edit Triangulation</div>
<div class="a" style="left:983px;top:731px;width:72px;height:18px;background:#c8c8c8;border:1px solid;border-color:#f0f0f0 #7c7c7c #7c7c7c #f0f0f0;text-align:center;line-height:16px;white-space:nowrap;color:#000;">Retriangulate</div>
<div class="a" style="left:1060px;top:731px;width:72px;height:18px;background:#c8c8c8;border:1px solid;border-color:#f0f0f0 #7c7c7c #7c7c7c #f0f0f0;text-align:center;line-height:16px;white-space:nowrap;color:#000;">Turn</div>
<div class="a" style="left:1042px;top:598px;width:11px;height:10px;border:1px solid #000;border-top-width:3px"></div>
<div class="a" style="left:1119px;top:598px;width:11px;height:10px;border:1px solid #000;border-top-width:3px"></div>
<div class="a" style="left:1042px;top:621px;width:11px;height:10px;border:1px solid #000;border-top-width:3px"></div>
<div class="a" style="left:1119px;top:621px;width:11px;height:10px;border:1px solid #000;border-top-width:3px"></div>
<div class="a" style="left:1042px;top:644px;width:11px;height:10px;border:1px solid #000;border-top-width:3px"></div>
<div class="a" style="left:1119px;top:667px;width:11px;height:10px;border:1px solid #000;border-top-width:3px"></div>
<div class="a" style="left:1119px;top:689px;width:11px;height:10px;border:1px solid #000;border-top-width:3px"></div>
<div class="a" style="left:975px;top:770px;width:4px;height:7px;border-left:1px solid #7c7c7c;border-top:1px solid #7c7c7c;box-shadow:inset 1px 1px 0 #f0f0f0"></div>
<div class="a" style="left:1137px;top:770px;width:3px;height:7px;border-right:1px solid #f0f0f0;border-top:1px solid #7c7c7c"></div>
<div class="a" style="left:979px;top:763px;width:158px;height:14px;background:conic-gradient(#a2a2a2 25%,#b9b9b9 0 50%,#a2a2a2 0 75%,#b9b9b9 0) 0 0/2px 2px;border:1px solid #202020;border-bottom:none;box-shadow:inset 1px 1px 0 #e0e0e0;text-align:center;line-height:14px;font-size:11px;overflow:hidden">Edit Geometry</div>
<div class="a" style="left:986px;top:764px;width:8px;height:14px;line-height:14px">-</div>
<div class="a" style="left:968px;top:777px;width:182px;height:6px;background:#c8c8c8"></div>
<div class="a" style="left:968px;top:782px;width:184px;height:1px;background:#7c7c7c"></div>
<div class="a" style="left:968px;top:783px;width:184px;height:1px;background:#f0f0f0"></div>
<!--/CP-->
<!--BT-->
<div class="a" style="left:0px;top:739px;width:968px;height:18px;background:#c8c8c8"></div>
<div class="a" style="left:0px;top:739px;width:16px;height:17px;white-space:nowrap;background:#c8c8c8;border:1px solid;border-color:#f0f0f0 #7c7c7c #7c7c7c #f0f0f0;text-align:center;line-height:14px;font-size:12px">&lt;</div>
<div class="a" style="left:16px;top:739px;width:125px;height:17px;background:#c8c8c8;border-top:1px solid #f0f0f0;border-left:1px solid #f0f0f0;border-right:2px solid #000;border-bottom:2px solid #000;text-align:center;line-height:14px;font-size:11px">0 / 100</div>
<div class="a" style="left:141px;top:739px;width:16px;height:17px;white-space:nowrap;background:#c8c8c8;border:1px solid;border-color:#f0f0f0 #7c7c7c #7c7c7c #f0f0f0;text-align:center;line-height:14px;font-size:12px">&gt;</div>
<div class="a" style="left:157px;top:739px;width:811px;height:18px;background:#bdbdbd"></div>
<div class="a" style="left:966px;top:756px;width:2px;height:1px;background:#f8f8f8"></div>
<div class="a" style="left:0px;top:757px;width:968px;height:1px;background:#e8e8e8"></div>
<div class="a" style="left:0px;top:758px;width:968px;height:1px;background:#8c8c8c"></div>
<div class="a" style="left:0px;top:759px;width:968px;height:25px;background:#c8c8c8"></div>
<div class="a" style="left:58px;top:759px;width:859px;height:25px;background-color:#cecece;background-image:repeating-linear-gradient(45deg,#dadada 0 1px,transparent 1px 3px),repeating-linear-gradient(-45deg,#c4c4c4 0 1px,transparent 1px 3px)"></div>
<div class="a" style="left:50px;top:759px;width:9px;height:25px;background:#8caed0;border:1px solid #707070"></div>
<svg class="a" style="left:0;top:0" width="968" height="836" viewBox="0 0 968 836"><rect x="63" y="759" width="1" height="11" fill="#74787c"/><rect x="71" y="759" width="1" height="11" fill="#74787c"/><rect x="80" y="759" width="1" height="11" fill="#74787c"/><rect x="89" y="759" width="1" height="11" fill="#74787c"/><rect x="97" y="759" width="1" height="11" fill="#74787c"/><rect x="106" y="759" width="1" height="11" fill="#74787c"/><rect x="114" y="759" width="1" height="11" fill="#74787c"/><rect x="123" y="759" width="1" height="11" fill="#74787c"/><rect x="132" y="759" width="1" height="11" fill="#74787c"/><rect x="140" y="759" width="1" height="25" fill="#74787c"/><rect x="149" y="759" width="1" height="11" fill="#74787c"/><rect x="157" y="759" width="1" height="11" fill="#74787c"/><rect x="166" y="759" width="1" height="11" fill="#74787c"/><rect x="175" y="759" width="1" height="11" fill="#74787c"/><rect x="183" y="759" width="1" height="11" fill="#74787c"/><rect x="192" y="759" width="1" height="11" fill="#74787c"/><rect x="200" y="759" width="1" height="11" fill="#74787c"/><rect x="209" y="759" width="1" height="11" fill="#74787c"/><rect x="218" y="759" width="1" height="11" fill="#74787c"/><rect x="226" y="759" width="1" height="25" fill="#74787c"/><rect x="235" y="759" width="1" height="11" fill="#74787c"/><rect x="243" y="759" width="1" height="11" fill="#74787c"/><rect x="252" y="759" width="1" height="11" fill="#74787c"/><rect x="261" y="759" width="1" height="11" fill="#74787c"/><rect x="269" y="759" width="1" height="11" fill="#74787c"/><rect x="278" y="759" width="1" height="11" fill="#74787c"/><rect x="286" y="759" width="1" height="11" fill="#74787c"/><rect x="295" y="759" width="1" height="11" fill="#74787c"/><rect x="304" y="759" width="1" height="11" fill="#74787c"/><rect x="312" y="759" width="1" height="25" fill="#74787c"/><rect x="321" y="759" width="1" height="11" fill="#74787c"/><rect x="329" y="759" width="1" height="11" fill="#74787c"/><rect x="338" y="759" width="1" height="11" fill="#74787c"/><rect x="347" y="759" width="1" height="11" fill="#74787c"/><rect x="355" y="759" width="1" height="11" fill="#74787c"/><rect x="364" y="759" width="1" height="11" fill="#74787c"/><rect x="372" y="759" width="1" height="11" fill="#74787c"/><rect x="381" y="759" width="1" height="11" fill="#74787c"/><rect x="390" y="759" width="1" height="11" fill="#74787c"/><rect x="398" y="759" width="1" height="25" fill="#74787c"/><rect x="407" y="759" width="1" height="11" fill="#74787c"/><rect x="415" y="759" width="1" height="11" fill="#74787c"/><rect x="424" y="759" width="1" height="11" fill="#74787c"/><rect x="433" y="759" width="1" height="11" fill="#74787c"/><rect x="441" y="759" width="1" height="11" fill="#74787c"/><rect x="450" y="759" width="1" height="11" fill="#74787c"/><rect x="458" y="759" width="1" height="11" fill="#74787c"/><rect x="467" y="759" width="1" height="11" fill="#74787c"/><rect x="476" y="759" width="1" height="11" fill="#74787c"/><rect x="484" y="759" width="1" height="25" fill="#74787c"/><rect x="493" y="759" width="1" height="11" fill="#74787c"/><rect x="501" y="759" width="1" height="11" fill="#74787c"/><rect x="510" y="759" width="1" height="11" fill="#74787c"/><rect x="519" y="759" width="1" height="11" fill="#74787c"/><rect x="527" y="759" width="1" height="11" fill="#74787c"/><rect x="536" y="759" width="1" height="11" fill="#74787c"/><rect x="544" y="759" width="1" height="11" fill="#74787c"/><rect x="553" y="759" width="1" height="11" fill="#74787c"/><rect x="562" y="759" width="1" height="11" fill="#74787c"/><rect x="570" y="759" width="1" height="25" fill="#74787c"/><rect x="579" y="759" width="1" height="11" fill="#74787c"/><rect x="587" y="759" width="1" height="11" fill="#74787c"/><rect x="596" y="759" width="1" height="11" fill="#74787c"/><rect x="605" y="759" width="1" height="11" fill="#74787c"/><rect x="613" y="759" width="1" height="11" fill="#74787c"/><rect x="622" y="759" width="1" height="11" fill="#74787c"/><rect x="630" y="759" width="1" height="11" fill="#74787c"/><rect x="639" y="759" width="1" height="11" fill="#74787c"/><rect x="648" y="759" width="1" height="11" fill="#74787c"/><rect x="656" y="759" width="1" height="25" fill="#74787c"/><rect x="665" y="759" width="1" height="11" fill="#74787c"/><rect x="673" y="759" width="1" height="11" fill="#74787c"/><rect x="682" y="759" width="1" height="11" fill="#74787c"/><rect x="691" y="759" width="1" height="11" fill="#74787c"/><rect x="699" y="759" width="1" height="11" fill="#74787c"/><rect x="708" y="759" width="1" height="11" fill="#74787c"/><rect x="716" y="759" width="1" height="11" fill="#74787c"/><rect x="725" y="759" width="1" height="11" fill="#74787c"/><rect x="734" y="759" width="1" height="11" fill="#74787c"/><rect x="742" y="759" width="1" height="25" fill="#74787c"/><rect x="751" y="759" width="1" height="11" fill="#74787c"/><rect x="759" y="759" width="1" height="11" fill="#74787c"/><rect x="768" y="759" width="1" height="11" fill="#74787c"/><rect x="777" y="759" width="1" height="11" fill="#74787c"/><rect x="785" y="759" width="1" height="11" fill="#74787c"/><rect x="794" y="759" width="1" height="11" fill="#74787c"/><rect x="802" y="759" width="1" height="11" fill="#74787c"/><rect x="811" y="759" width="1" height="11" fill="#74787c"/><rect x="820" y="759" width="1" height="11" fill="#74787c"/><rect x="828" y="759" width="1" height="25" fill="#74787c"/><rect x="837" y="759" width="1" height="11" fill="#74787c"/><rect x="845" y="759" width="1" height="11" fill="#74787c"/><rect x="854" y="759" width="1" height="11" fill="#74787c"/><rect x="863" y="759" width="1" height="11" fill="#74787c"/><rect x="871" y="759" width="1" height="11" fill="#74787c"/><rect x="880" y="759" width="1" height="11" fill="#74787c"/><rect x="888" y="759" width="1" height="11" fill="#74787c"/><rect x="897" y="759" width="1" height="11" fill="#74787c"/><rect x="906" y="759" width="1" height="11" fill="#74787c"/><rect x="914" y="759" width="1" height="25" fill="#74787c"/><text x="54.2" y="781" text-anchor="middle" font-family="Liberation Sans" font-size="12" fill="#102030">0</text><text x="140.2" y="781" text-anchor="middle" font-family="Liberation Sans" font-size="12" fill="#000">10</text><text x="226.2" y="781" text-anchor="middle" font-family="Liberation Sans" font-size="12" fill="#000">20</text><text x="312.2" y="781" text-anchor="middle" font-family="Liberation Sans" font-size="12" fill="#000">30</text><text x="398.2" y="781" text-anchor="middle" font-family="Liberation Sans" font-size="12" fill="#000">40</text><text x="484.2" y="781" text-anchor="middle" font-family="Liberation Sans" font-size="12" fill="#000">50</text><text x="570.2" y="781" text-anchor="middle" font-family="Liberation Sans" font-size="12" fill="#000">60</text><text x="656.2" y="781" text-anchor="middle" font-family="Liberation Sans" font-size="12" fill="#000">70</text><text x="742.2" y="781" text-anchor="middle" font-family="Liberation Sans" font-size="12" fill="#000">80</text><text x="828.2" y="781" text-anchor="middle" font-family="Liberation Sans" font-size="12" fill="#000">90</text><text x="914.2" y="781" text-anchor="middle" font-family="Liberation Sans" font-size="12" fill="#000">100</text><rect x="54" y="759" width="1" height="25" fill="#6a8098"/><g stroke="#000" fill="none"><rect x="13.5" y="763.5" width="16" height="5" stroke-width="1.3"/><path d="M16,766.5 q2.5,-2 5,0 q3,1.5 6,0" stroke-width="0.8"/><rect x="13.5" y="776.5" width="16" height="2.5" stroke-width="1.3"/><path d="M16.5,775V770.5M14.8,772.2L16.5,770.3L18.2,772.2M26.5,770V774.5M24.8,772.8L26.5,774.8L28.2,772.8" stroke-width="1"/></g></svg>
<div class="a" style="left:0px;top:784px;width:1152px;height:50px;background:#c8c8c8"></div>
<div class="a" style="left:1px;top:786px;width:98px;height:23px;background:#dcc6c6;border:1px solid;border-color:#7a7262 #fff #fff #7a7262"></div>
<div class="a" style="left:1px;top:809px;width:98px;height:24px;background:#fff;border:1px solid;border-color:#7a7262 #fff #fff #7a7262"></div>
<div class="a" style="left:103px;top:784px;width:1px;height:50px;background:#7c7c7c"></div>
<div class="a" style="left:104px;top:784px;width:1px;height:50px;background:#f0f0f0"></div>
<div class="a" style="left:107px;top:788px;width:200px;height:21px;border:1px solid;border-color:#7c7c7c #f0f0f0 #f0f0f0 #7c7c7c;padding-left:6px;line-height:19px;font-size:11px">1 Object Selected</div>
<div class="a" style="left:107px;top:813px;width:500px;height:23px;border:1px solid;border-color:#7c7c7c #f0f0f0 #f0f0f0 #7c7c7c;border-bottom:none;padding-left:6px;line-height:19px;font-size:11px">Rendering Time&nbsp; 0:00:00</div>
<svg class="a" style="left:310px;top:786px" width="60" height="22" viewBox="310 786 60 22"><path d="M317.5,797 v-2.5 a2.5,2.5 0 0 1 5,0 v1" stroke="#000" stroke-width="1.3" fill="none"/><rect x="316" y="796.5" width="8" height="6.5" fill="#000"/><path d="M316,798.6h8M316,800.8h8" stroke="#c8c8c8" stroke-width="0.8"/><rect x="340.5" y="789.5" width="14" height="15" fill="none" stroke="#000"/><path d="M347.5,790v3.5M347.5,800.5v3.5M341,797h3.5M351,797h3.5" stroke="#000" stroke-width="0.8"/><circle cx="347.5" cy="797" r="2.8" fill="#505050" stroke="#000" stroke-width="0.8"/><path d="M340.5,789.5h14v15h-14z" fill="none" stroke="#fff" stroke-width="0.5" transform="translate(1,1)" opacity="0.6"/></svg>
<div class="a" style="left:362px;top:789px;width:12px;height:18px;line-height:18px;font-size:11px;color:#000">X:</div>
<div class="a" style="left:373px;top:789px;width:58px;height:20px;background:#e6e6e6;border:1px solid;border-color:#000 #f0f0f0 #f0f0f0 #000;border-width:2px 1px 1px 2px;padding-left:2px;line-height:16px;color:#8a8a8a;font-size:11px">-21.307</div>
<div class="a" style="left:444px;top:789px;width:12px;height:18px;line-height:18px;font-size:11px;color:#000">Y:</div>
<div class="a" style="left:455px;top:789px;width:58px;height:20px;background:#e6e6e6;border:1px solid;border-color:#000 #f0f0f0 #f0f0f0 #000;border-width:2px 1px 1px 2px;padding-left:2px;line-height:16px;color:#8a8a8a;font-size:11px">50.08</div>
<div class="a" style="left:525px;top:789px;width:12px;height:18px;line-height:18px;font-size:11px;color:#000">Z:</div>
<div class="a" style="left:537px;top:789px;width:58px;height:20px;background:#e6e6e6;border:1px solid;border-color:#000 #f0f0f0 #f0f0f0 #000;border-width:2px 1px 1px 2px;padding-left:2px;line-height:16px;color:#8a8a8a;font-size:11px">0.0</div>
<div class="a" style="left:609px;top:788px;width:100px;height:21px;border:1px solid;border-color:#7c7c7c #f0f0f0 #f0f0f0 #7c7c7c;padding-left:6px;line-height:19px;font-size:11px">Grid = 10.0</div>
<div class="a" style="left:609px;top:813px;width:100px;height:23px;border:1px solid;border-color:#7c7c7c #f0f0f0 #f0f0f0 #7c7c7c;border-bottom:none;padding-left:6px;line-height:19px;font-size:11px">Add Time Tag</div>
<div class="a" style="left:710px;top:787px;width:44px;height:43px;white-space:nowrap;background:#c8c8c8;border:1px solid;border-color:#f0f0f0 #7c7c7c #7c7c7c #f0f0f0;"></div>
<svg class="a" style="left:710px;top:787px" width="44" height="43"><circle cx="13" cy="21.5" r="4.5" fill="none" stroke="#000" stroke-width="2.2"/><path d="M17,21.5h13M26,21.5v5M29,21.5v4" stroke="#000" stroke-width="2.4"/></svg>
<div class="a" style="left:757px;top:787px;width:48px;height:22px;white-space:nowrap;background:#c8c8c8;border:1px solid;border-color:#f0f0f0 #7c7c7c #7c7c7c #f0f0f0;text-align:center;line-height:20px;font-size:11px">Auto Key</div>
<div class="a" style="left:757px;top:809px;width:48px;height:22px;white-space:nowrap;background:#c8c8c8;border:1px solid;border-color:#f0f0f0 #7c7c7c #7c7c7c #f0f0f0;text-align:center;line-height:20px;font-size:11px">Set Key</div>
<div class="a" style="left:808px;top:788px;width:114px;height:20px;background:#e6e6e6;border:1px solid;border-color:#5a5a5a #f4f4f4 #f4f4f4 #5a5a5a;box-shadow:inset 1px 1px 0 #9a9a9a;padding-left:3px;line-height:17px;font-size:11px">Selected</div>
<div class="a" style="left:905px;top:790px;width:16px;height:16px;background:#ece9d8;border:1px solid;border-color:#fff #8c8c8c #8c8c8c #fff"></div>
<svg class="a" style="left:905px;top:790px" width="16" height="16"><path d="M4,6 h8 l-4,4z" fill="#000"/></svg>
<div class="a" style="left:808px;top:810px;width:116px;height:21px;white-space:nowrap;background:#c8c8c8;border:1px solid;border-color:#f0f0f0 #7c7c7c #7c7c7c #f0f0f0;text-align:center;line-height:19px;font-size:11px">Key Filters...</div>
<svg class="a" style="left:925px;top:784px" width="227" height="50" viewBox="925 784 227 50">
<g fill="#101010">
<rect x="932" y="793" width="2" height="10"/><path d="M934,798 L941,793 V803Z M940,798 L947,793 V803Z"/>
<path d="M953.5,792V804" stroke="#808080"/><path d="M954.5,792V804" stroke="#f0f0f0"/>
<path d="M960,798 L967,793 V803Z"/><rect x="967" y="793" width="2" height="10"/><rect x="970" y="793" width="2" height="10"/>
<rect x="982" y="791" width="14.5" height="13" fill="none" stroke="#000" stroke-width="2"/><path d="M986,793.5 L993,797.5 L986,801.5Z"/><path d="M997,806 l2,-2 v2z"/>
<rect x="1004" y="793" width="2" height="10"/><rect x="1007" y="793" width="2" height="10"/><path d="M1010,793 L1017,798 L1010,803Z"/>
<path d="M1025.5,792V804" stroke="#808080"/><path d="M1026.5,792V804" stroke="#f0f0f0"/>
<path d="M1030,793 L1037,798 L1030,803Z M1036,793 L1043,798 L1036,803Z"/><rect x="1043" y="793" width="2" height="10"/>
<path d="M1054.5,790V805" stroke="#808080"/><path d="M1055.5,790V805" stroke="#f0f0f0"/>
<rect x="935" y="815" width="1.5" height="8"/><rect x="945" y="815" width="1.5" height="8"/><path d="M937,819 L941,816 V822Z M944.5,819 L940.5,816 V822Z"/>
<path d="M951.5,812V828" stroke="#808080"/><path d="M952.5,812V828" stroke="#f0f0f0"/>
<path d="M1054.5,812V828" stroke="#808080"/><path d="M1055.5,812V828" stroke="#f0f0f0"/>
</g>
<!-- zoom -->
<circle cx="1065" cy="795.2" r="4.6" fill="#c8c8d4" stroke="#000050" stroke-width="1.3"/><path d="M1063,793.5 a2.5,2.5 0 0 1 3,-0.8" stroke="#fff" stroke-width="1" fill="none"/><path d="M1068.2,798.6 L1073.2,804" stroke="#000" stroke-width="2"/><path d="M1070,800.5 L1073,803.8" stroke="#2030c0" stroke-width="1.4"/>
<!-- zoom all -->
<path d="M1085.5,790.5h12v10h-12zM1091.5,790.5v10M1085.5,795.5h12" stroke="#900000" fill="#c0c0c8" stroke-width="1"/>
<circle cx="1086.5" cy="798.6" r="3.6" fill="#c8c8d4" stroke="#000050" stroke-width="1.2"/><path d="M1089,801.2 L1091.5,804" stroke="#000" stroke-width="1.8"/>
<!-- zoom extents -->
<path d="M1107,790.5h-2v2.5M1118.5,790.5h2v2.5M1104.9,802v2.5h2M1120.5,802v2.5h-2" stroke="#000" fill="none" stroke-width="1.1"/>
<path d="M1107.5,794.5h8v8h-8z" stroke="#101080" fill="#c0c0c0" stroke-width="1.1"/><path d="M1107.5,794.5l2,-2h8l-2,2z" stroke="#101080" fill="#fff" stroke-width="0.9"/><path d="M1115.5,794.5l2,-2v8l-2,2z" stroke="#101080" fill="#808080" stroke-width="0.9"/>
<path d="M1120,806 l2.5,-2.5 v2.5z" fill="#000"/>
<!-- zoom extents all -->
<path d="M1131.5,790.5h12v10h-12zM1137.5,790.5v10M1131.5,795.5h12" stroke="#900000" fill="#c0c0c8" stroke-width="1"/>
<path d="M1128.5,797.5h7v7h-7z" stroke="#101080" fill="#c0c0c0" stroke-width="1.1"/><path d="M1128.5,797.5l2,-2h7l-2,2z" stroke="#101080" fill="#fff" stroke-width="0.9"/><path d="M1135.5,797.5l2,-2v7l-2,2z" stroke="#101080" fill="#909090" stroke-width="0.9"/>
<path d="M1143.5,806 l2.5,-2.5 v2.5z" fill="#000"/>
<!-- time config -->
<rect x="1035.5" y="813.5" width="11" height="10" fill="#fff" stroke="#000"/><rect x="1035.5" y="813.5" width="11" height="2" fill="#000"/>
<circle cx="1046" cy="821.5" r="4" fill="#fff" stroke="#c02020" stroke-width="1.1"/><path d="M1046,819v3h2" stroke="#c02020" fill="none"/>
<!-- fov -->
<path d="M1059,812.5 L1075,819.5 L1059,826.8Z" fill="#d0d0d0" stroke="#000" stroke-width="1.1"/>
<path d="M1059.5,813.5 v12.5 l5,-2.3 v-8z" fill="#909090" opacity="0.7"/>
<circle cx="1067" cy="819.5" r="2.5" fill="none" stroke="#000" stroke-width="0.8"/>
<path d="M1073,828 l2.5,-2.5 v2.5z" fill="#000"/>
<!-- pan hand -->
<path d="M1083,820 q-1.5,-2 0.5,-3 l2.5,2.5 v-5.5 q1,-1.8 2.2,0 v4 v-5.2 q1.2,-1.8 2.4,0 v5.2 v-4.6 q1.2,-1.6 2.4,0 v4.6 v-3 q1.2,-1.5 2.3,0 v5.5 q-0.2,4.5 -4.2,6 h-3.3 q-2.8,-1 -4.8,-4.5z" fill="#d8d8d8" stroke="#000" stroke-width="1"/>
<path d="M1097,828 l2.5,-2.5 v2.5z" fill="#000"/>
<!-- arc rotate -->
<circle cx="1112" cy="819.5" r="4.5" fill="none" stroke="#000" stroke-width="1"/>
<path d="M1112,819.5V812.5M1112,819.5H1120.5" stroke="#000" stroke-width="1"/><path d="M1110.3,814.3 L1112,811.8 L1113.7,814.3Z M1118.5,817.8 L1121,819.5 L1118.5,821.2Z" fill="#000"/>
<path d="M1112,819.5 L1105.5,825.5" stroke="#2030c0" stroke-width="1.1"/><path d="M1105,826.5 l0.5,-3 l2.5,2.5z" fill="#000"/>
<path d="M1120,828 l2.5,-2.5 v2.5z" fill="#000"/>
<!-- maximize toggle -->
<rect x="1129.5" y="812.5" width="11" height="10.5" fill="#c8c8d0" stroke="#101080" stroke-width="1.2"/><path d="M1137,819.5h6.5v7h-7v-4" fill="none" stroke="#000" stroke-width="1.2"/>
<path d="M1132,815 l5,4.5M1132,815h2.5M1132,815v2.5" stroke="#000" fill="none" stroke-width="1"/>
</svg>
<div class="a" style="left:955px;top:810px;width:64px;height:20px;background:#e6e6e6;border:1px solid;border-color:#000 #f0f0f0 #f0f0f0 #000;border-width:2px 1px 1px 2px;padding-left:3px;line-height:16px;font-size:11px">0</div>
<div class="a" style="left:1020px;top:811px;width:10px;height:19px;white-space:nowrap;background:#c8c8c8;border:1px solid;border-color:#f0f0f0 #7c7c7c #7c7c7c #f0f0f0;"></div>
<svg class="a" style="left:1020px;top:811px" width="10" height="19"><path d="M2,8 L5,4 L8,8Z M2,11 L8,11 L5,15Z" fill="#000"/></svg>
<div class="a" style="left:0px;top:834px;width:93px;height:2px;background:#3a9a3a"></div>
<div class="a" style="left:93px;top:834px;width:1059px;height:2px;background:#2a6ae0"></div>
<!--/BT-->
</body></html>
